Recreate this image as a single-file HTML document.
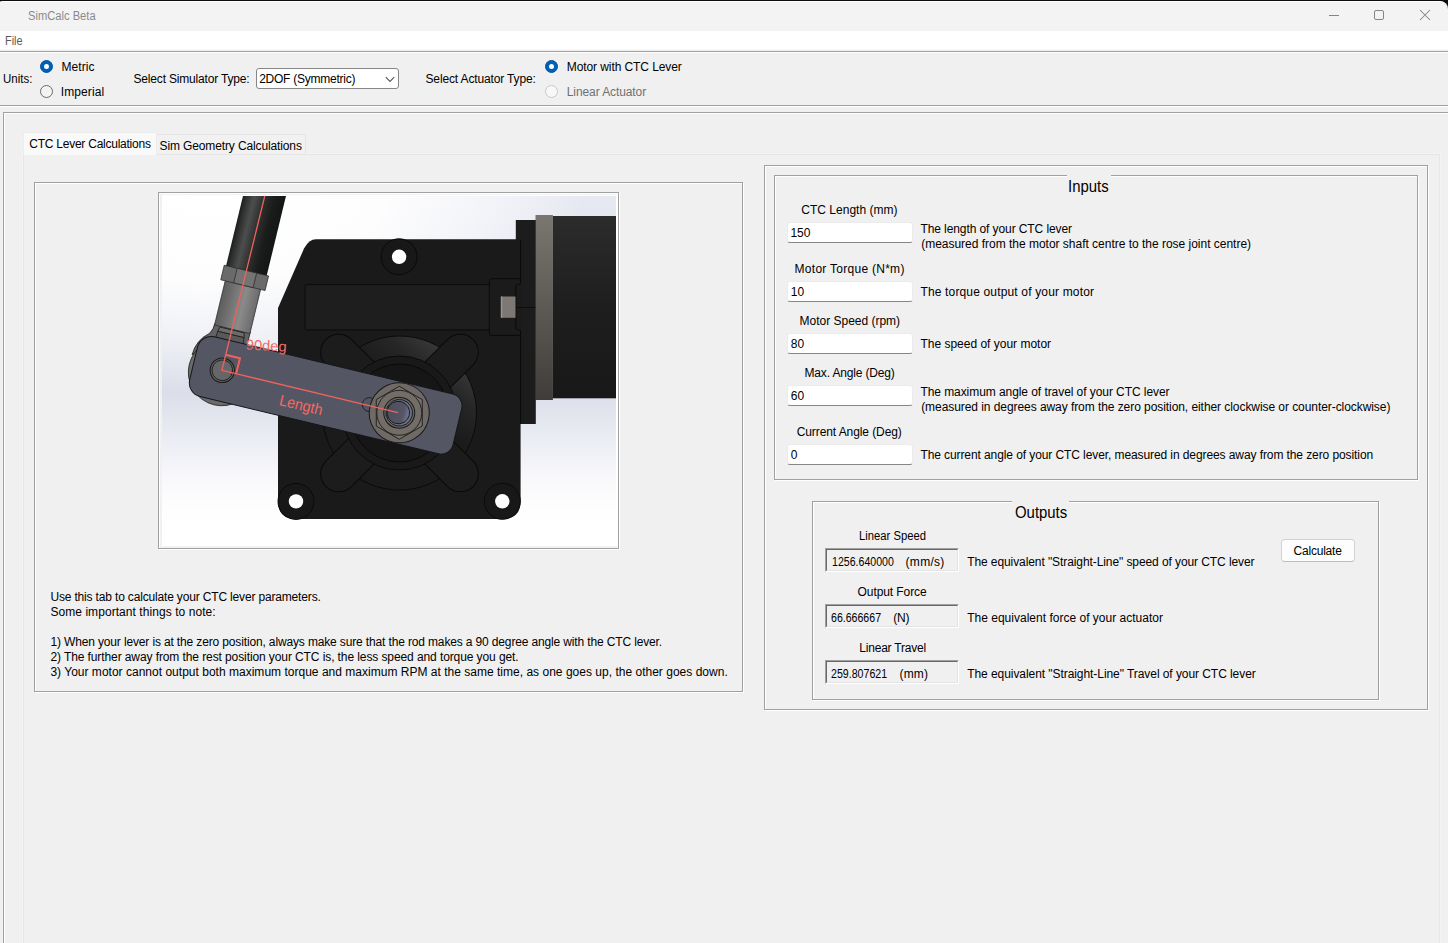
<!DOCTYPE html>
<html><head><meta charset="utf-8"><title>SimCalc Beta</title>
<style>
html,body{margin:0;padding:0;background:#f0f0f0}
body{width:1448px;height:943px;overflow:hidden;position:relative;background:#f0f0f0;font-family:"Liberation Sans",sans-serif;font-size:12px;color:#000}
div{position:absolute;box-sizing:border-box}
.t{white-space:pre;line-height:16px;height:16px}
.ew{border:1px solid #fff}
.eg{border:1px solid #a0a0a0}
.hl{left:0;width:1448px;height:1px}
.in{background:#fff;border:1px solid #ebebeb;border-bottom:1px solid #868686;border-radius:3px;width:126px;height:21px;left:787px}
.of{width:134px;height:24px;left:825px;border-top:1px solid #a0a0a0;border-left:1px solid #a0a0a0;border-right:1px solid #fff;border-bottom:1px solid #fff}
.of i{position:absolute;display:block;left:0;top:0;right:0;bottom:0;border-top:1px solid #696969;border-left:1px solid #696969;border-right:1px solid #e3e3e3;border-bottom:1px solid #e3e3e3}
.rb{width:13px;height:13px;border-radius:50%}
.rb.on{background:#005fb8;border:1px solid #00559f}
.rb.on i{position:absolute;left:3px;top:3px;width:5px;height:5px;border-radius:50%;background:#fff}
.rb.off{background:#f3f3f3;border:1px solid #6a6a6a}
.rb.dis{background:#f8f8f8;border:1px solid #c8c8c8}
</style></head><body>

<div style="left:0;top:0;width:1448px;height:12px;background:#0c0c0c"></div>
<div style="left:-5px;top:1px;width:1453px;height:30px;background:#f3f3f3;border-radius:8px 8px 0 0;border-top:1px solid #fff"></div>
<div style="left:0;top:31px;width:1448px;height:18px;background:#fff"></div>
<div class="hl" style="top:49px;background:#f8f8f8"></div>
<div class="hl" style="top:51px;background:#a0a0a0"></div>
<div class="hl" style="top:52px;background:#fff"></div>
<div class="hl" style="top:105px;background:#a0a0a0"></div>
<div class="hl" style="top:106px;background:#fff"></div>
<svg style="position:absolute;left:1320px;top:5px" width="120" height="22" viewBox="1320 5 120 22" fill="none" stroke="#858585" stroke-width="1">
<path d="M1329,15.5 H1339"/>
<rect x="1374.5" y="10.5" width="9" height="9" rx="1.5"/>
<path d="M1420,10 L1430,20 M1430,10 L1420,20" stroke-width="1.05"/>
</svg>
<div style="left:4px;top:113px;width:1500px;height:900px;border-left:1px solid #fff;border-top:1px solid #fff"></div>
<div style="left:3px;top:112px;width:1500px;height:900px;border-left:1px solid #a0a0a0;border-top:1px solid #a0a0a0"></div>
<div style="left:22px;top:153px;width:1419px;height:900px;border:1px solid #f4f4f4"></div>
<div style="left:23px;top:154px;width:1417px;height:900px;border:1px solid #e6e6e6"></div>
<div style="left:156px;top:134px;width:150px;height:21px;border:1px solid #e5e5e5;border-left:none;border-bottom:1px solid #e5e5e5;background:#f1f1f1"></div>
<div style="left:23px;top:132px;width:134px;height:23px;border:1px solid #ececec;border-bottom:none;background:#f9f9f9"></div>
<div class="rb on" style="left:40px;top:60px"><i></i></div>
<div class="rb off" style="left:40px;top:85px"></div>
<div class="rb on" style="left:545px;top:60px"><i></i></div>
<div class="rb dis" style="left:545px;top:85px"></div>
<div style="left:256px;top:68px;width:143px;height:21px;background:#fff;border:1px solid #868686;border-radius:3px"></div>
<svg style="position:absolute;left:384px;top:74px" width="12" height="10" viewBox="384 74 12 10" fill="none" stroke="#555" stroke-width="1.1"><path d="M385.8,77.2 L390,81.4 L394.2,77.2"/></svg>
<div class="ew" style="left:35px;top:183px;width:709px;height:510px"></div><div class="eg" style="left:34px;top:182px;width:709px;height:510px"></div>
<div style="left:159px;top:193px;width:461px;height:357px;border:1px solid #fff"></div>
<div style="left:158px;top:192px;width:461px;height:357px;border:1px solid #a0a0a0;background:#fff"></div>
<div style="left:160px;top:194px;width:457px;height:354px;background:#f1f1f1"></div>
<div style="left:161.5px;top:195px;width:456.5px;height:351px;background:#fff"></div>
<svg style="position:absolute;left:162px;top:196px" width="454" height="350" viewBox="162 196 454 350">
<defs>
<linearGradient id="bgv" x1="0" y1="195" x2="0" y2="546" gradientUnits="userSpaceOnUse">
<stop offset="0" stop-color="#e7e9f2"/><stop offset=".4" stop-color="#dfe2ec"/><stop offset=".57" stop-color="#dcdfea"/><stop offset=".68" stop-color="#e9ebf2"/><stop offset=".8" stop-color="#f8f8fb"/><stop offset=".9" stop-color="#fefefe"/><stop offset="1" stop-color="#ffffff"/>
</linearGradient>
<radialGradient id="bgw" cx="0" cy="0" r="1" gradientUnits="userSpaceOnUse" gradientTransform="translate(215 190) scale(370 200)">
<stop offset="0" stop-color="#fff" stop-opacity="1"/><stop offset=".45" stop-color="#fff" stop-opacity=".93"/><stop offset=".75" stop-color="#fff" stop-opacity=".5"/><stop offset="1" stop-color="#fff" stop-opacity="0"/>
</radialGradient>
<linearGradient id="rodg" x1="-21" y1="0" x2="21" y2="0" gradientUnits="userSpaceOnUse">
<stop offset="0" stop-color="#1a1c1c"/><stop offset=".07" stop-color="#2a2c2c"/><stop offset=".27" stop-color="#4c4e4e"/><stop offset=".5" stop-color="#2e3030"/><stop offset=".75" stop-color="#1a1c1c"/><stop offset="1" stop-color="#141616"/>
</linearGradient>
<linearGradient id="shankg" x1="-19" y1="0" x2="19" y2="0" gradientUnits="userSpaceOnUse">
<stop offset="0" stop-color="#5c5c5c"/><stop offset=".25" stop-color="#6e6e6e"/><stop offset=".62" stop-color="#8a8a8a"/><stop offset="1" stop-color="#6a6a6a"/>
</linearGradient>
<linearGradient id="plateg" x1="0" y1="215" x2="0" y2="400" gradientUnits="userSpaceOnUse">
<stop offset="0" stop-color="#7a7770"/><stop offset="1" stop-color="#403c39"/>
</linearGradient>
<linearGradient id="cylg" x1="0" y1="216" x2="0" y2="398" gradientUnits="userSpaceOnUse">
<stop offset="0" stop-color="#2c2c2c"/><stop offset=".5" stop-color="#1e1e1e"/><stop offset="1" stop-color="#181818"/>
</linearGradient>
<linearGradient id="ringg" x1="452" y1="352" x2="412" y2="400" gradientUnits="userSpaceOnUse">
<stop offset="0" stop-color="#3a3a3a"/><stop offset=".5" stop-color="#262626"/><stop offset="1" stop-color="#1b1b1b"/>
</linearGradient>
<linearGradient id="shaftg" x1="170" y1="0" x2="193" y2="0" gradientUnits="userSpaceOnUse">
<stop offset="0" stop-color="#4d4f5d"/><stop offset=".7" stop-color="#545666"/><stop offset="1" stop-color="#7a809c"/>
</linearGradient>
</defs>
<rect x="161" y="195" width="455" height="351" fill="url(#bgv)"/>
<rect x="161" y="195" width="455" height="351" fill="url(#bgw)"/>
<!-- motor cylinder / plate / flange -->
<rect x="552.5" y="216" width="64" height="182.3" fill="url(#cylg)"/>
<rect x="535.5" y="215" width="17.4" height="185" fill="url(#plateg)"/>
<rect x="515.8" y="220" width="20" height="204" fill="#1c1c1c"/>
<!-- body -->
<path d="M316,239.2 H520.6 V501 Q520.6,519 502.6,519 H296 Q278,519 278,501 V308 L304,248.5 Q309,239.2 316,239.2 Z" fill="#1a1a1a"/>
<!-- recess -->
<rect x="305" y="284.6" width="186" height="45.3" rx="2" fill="#1e1e1e" stroke="#0b0b0b" stroke-width="1"/>
<path d="M520.6,278.7 H492 Q489.3,278.7 489.3,281.5 V332.5 Q489.3,335.4 492,335.4 H520.6" fill="#1b1b1b" stroke="#0b0b0b" stroke-width="1"/>
<path d="M520.6,240 V283.7 L515.8,285.3 V328.8 L520.6,330.5 V424" fill="none" stroke="#0b0b0b" stroke-width="1"/>
<path d="M516,307.5 H535.5" fill="none" stroke="#0b0b0b" stroke-width=".8"/>
<rect x="501" y="296.5" width="14.5" height="21.3" fill="#7d7873"/>
<path d="M501.5,296.5 V317.8" stroke="#9a9590" stroke-width="1.5"/>
<!-- ears -->
<g fill="#1c1c1c" stroke="#0a0a0a" stroke-width="1">
<circle cx="399.5" cy="413" r="77" fill="url(#ringg)"/>
<g transform="translate(399.5 413)">
<rect x="-18" y="-104" width="36" height="208" rx="18" transform="rotate(45)"/>
<rect x="-18" y="-104" width="36" height="208" rx="18" transform="rotate(-45)"/>
</g>
<circle cx="399.5" cy="413" r="57" fill="#191919"/>
<circle cx="399.5" cy="413" r="49" fill="#161616"/>
</g>
<!-- mounting holes -->
<g stroke="#0a0a0a" stroke-width="1" fill="#181818">
<circle cx="399.1" cy="256.8" r="18"/><circle cx="296" cy="501.4" r="18"/><circle cx="502.3" cy="501.3" r="18"/>
</g>
<g fill="#fff"><circle cx="399.1" cy="256.8" r="7.2"/><circle cx="296" cy="501.4" r="7.2"/><circle cx="502.3" cy="501.3" r="7.2"/></g>
<!-- rod -->
<g transform="translate(222.3 370.3) rotate(13.6)">
<path d="M-33,-8 A33,33 0 0 1 -21,-33 Q-18,-38 -18.2,-44 H18.2 V-20 H-20 Z" fill="#626262" stroke="#222" stroke-width=".8"/>
<circle cx="0" cy="2" r="33.5" fill="#6b6b6b" stroke="#222" stroke-width=".8"/>
<rect x="-18.2" y="-90" width="36.4" height="47.8" fill="url(#shankg)" stroke="#2a2a2a" stroke-width=".7"/>
<path d="M-13.5,-37 H13.5 L14.5,-26 H-14.5 Z" fill="#595959" stroke="#1e1e1e" stroke-width=".8"/><path d="M-12.5,-41.5 H12.5 L13.5,-37 H-13.5 Z" fill="#6c6c6c" stroke="#1e1e1e" stroke-width=".8"/>
<rect x="-20.9" y="-210" width="41.8" height="108" fill="url(#rodg)"/>
<rect x="-22.8" y="-102.6" width="45.6" height="15" fill="#6a6a6a" stroke="#2a2a2a" stroke-width=".7"/>
<rect x="-9.5" y="-102.6" width="20" height="15" fill="#747474" stroke="#2a2a2a" stroke-width=".7"/>
</g>
<!-- lever -->
<g transform="translate(222.3 370.3) rotate(13.5)">
<path d="M-15.5,-30.7 H229.7 A12,12 0 0 1 241.7,-18.7 V18.7 A12,12 0 0 1 229.7,30.7 H-15.5 A14,14 0 0 1 -29.5,16.7 V-16.7 A14,14 0 0 1 -15.5,-30.7 Z" fill="#545664" stroke="#16171b" stroke-width="1"/>
<circle cx="0" cy="0" r="12.2" fill="#5e5e60" stroke="#1a1a1a" stroke-width="1"/>
<circle cx="0" cy="0" r="10.3" fill="#666668" stroke="#1a1a1a" stroke-width=".8"/>
<!-- washer & nut -->
<circle cx="151" cy="-1" r="7" fill="#545664" stroke="#1a1a1a" stroke-width=".8"/>
<circle cx="182" cy="0" r="30" fill="#6f6a65" stroke="#1a1a1a" stroke-width="1"/>
<path d="M182,-26.5 L205,-13.2 V13.2 L182,26.5 L159,13.2 V-13.2 Z" fill="#77726d" stroke="#24221f" stroke-width="1" transform="rotate(-13.5 182 0)"/>
<circle cx="182" cy="0" r="22.5" fill="#726d68" stroke="#24221f" stroke-width=".9"/>
<circle cx="182" cy="0" r="15.5" fill="#6a6661" stroke="#1a1a1a" stroke-width="1"/>
<circle cx="182" cy="0" r="13.3" fill="#6c7088" stroke="#1a1a1a" stroke-width=".9"/>
<circle cx="181" cy="0" r="11.3" fill="url(#shaftg)" stroke="#1a1a1a" stroke-width=".9"/>
</g>
<!-- red annotation -->
<g stroke="#f0625c" fill="none" stroke-width="1.3">
<path d="M266.5,189 L221.9,370.3 L398,412.6"/>
<path d="M225.7,354.7 L240,358.2 L236.2,373.6" stroke-width="2"/>
</g>
<g fill="#f26a64" font-family="'Liberation Sans',sans-serif">
<text x="245.5" y="349.5" font-size="14.5" transform="rotate(3 245.5 349.5)" textLength="41" lengthAdjust="spacingAndGlyphs">90deg</text>
<text x="278.5" y="405" font-size="15.5" transform="rotate(13.5 278.5 405)" textLength="44" lengthAdjust="spacingAndGlyphs">Length</text>
</g>
</svg>

<div class="ew" style="left:765px;top:166px;width:664px;height:545px"></div><div class="eg" style="left:764px;top:165px;width:664px;height:545px"></div>
<div class="ew" style="left:775px;top:176px;width:644px;height:305px"></div><div class="eg" style="left:774px;top:175px;width:644px;height:305px"></div>
<div style="left:1067px;top:174px;width:44px;height:4px;background:#f0f0f0"></div>
<div class="ew" style="left:813px;top:502px;width:567px;height:199px"></div><div class="eg" style="left:812px;top:501px;width:567px;height:199px"></div>
<div style="left:1012px;top:500px;width:57px;height:4px;background:#f0f0f0"></div>
<div class="in" style="top:222px"></div>
<div class="in" style="top:281px"></div>
<div class="in" style="top:333px"></div>
<div class="in" style="top:385px"></div>
<div class="in" style="top:444px"></div>
<div class="of" style="top:548px"><i></i></div>
<div class="of" style="top:604px"><i></i></div>
<div class="of" style="top:660px"><i></i></div>
<div style="left:1281px;top:539px;width:74px;height:23px;background:#fdfdfd;border:1px solid #d2d2d2;border-bottom-color:#bdbdbd;border-radius:4px"></div>
<div class="t" style="left:28.20px;top:8px;letter-spacing:0.000px;color:#8a8a8a;transform:scaleX(0.9299);transform-origin:0 0">SimCalc Beta</div>
<div class="t" style="left:5.40px;top:33px;letter-spacing:0.000px;color:#5a5a5a;transform:scaleX(0.9053);transform-origin:0 0">File</div>
<div class="t" style="left:2.50px;top:71px;letter-spacing:0.000px;transform:scaleX(0.9558);transform-origin:0 0">Units:</div>
<div class="t" style="left:61.50px;top:59px;letter-spacing:0.087px">Metric</div>
<div class="t" style="left:60.70px;top:84px;letter-spacing:0.127px">Imperial</div>
<div class="t" style="left:133.50px;top:71px;letter-spacing:-0.177px">Select Simulator Type:</div>
<div class="t" style="left:259.20px;top:71px;letter-spacing:-0.247px">2DOF (Symmetric)</div>
<div class="t" style="left:425.50px;top:71px;letter-spacing:-0.141px">Select Actuator Type:</div>
<div class="t" style="left:566.80px;top:59px;letter-spacing:-0.089px">Motor with CTC Lever</div>
<div class="t" style="left:566.80px;top:84px;letter-spacing:-0.099px;color:#707070">Linear Actuator</div>
<div class="t" style="left:29.30px;top:136px;letter-spacing:-0.244px">CTC Lever Calculations</div>
<div class="t" style="left:159.50px;top:138px;letter-spacing:-0.124px">Sim Geometry Calculations</div>
<div class="t" style="left:50.40px;top:589px;letter-spacing:-0.164px">Use this tab to calculate your CTC lever parameters.</div>
<div class="t" style="left:50.40px;top:604px;letter-spacing:0.062px">Some important things to note:</div>
<div class="t" style="left:50.40px;top:634px;letter-spacing:-0.143px">1) When your lever is at the zero position, always make sure that the rod makes a 90 degree angle with the CTC lever.</div>
<div class="t" style="left:50.40px;top:649px;letter-spacing:-0.095px">2) The further away from the rest position your CTC is, the less speed and torque you get.</div>
<div class="t" style="left:50.40px;top:664px;letter-spacing:0.014px">3) Your motor cannot output both maximum torque and maximum RPM at the same time, as one goes up, the other goes down.</div>
<div class="t" style="left:1068.07px;top:177px;letter-spacing:0.000px;font-size:16px;line-height:20px;height:20px;transform:scaleX(0.9322);transform-origin:0 0">Inputs</div>
<div class="t" style="left:801.20px;top:202px;letter-spacing:0.027px">CTC Length (mm)</div>
<div class="t" style="left:790.40px;top:225px;letter-spacing:0.000px">150</div>
<div class="t" style="left:920.40px;top:221px;letter-spacing:-0.088px">The length of your CTC lever</div>
<div class="t" style="left:921.20px;top:236px;letter-spacing:-0.015px">(measured from the motor shaft centre to the rose joint centre)</div>
<div class="t" style="left:794.60px;top:261px;letter-spacing:0.273px">Motor Torque (N*m)</div>
<div class="t" style="left:790.80px;top:284px;letter-spacing:0.000px">10</div>
<div class="t" style="left:920.40px;top:284px;letter-spacing:0.161px">The torque output of your motor</div>
<div class="t" style="left:799.50px;top:313px;letter-spacing:-0.006px">Motor Speed (rpm)</div>
<div class="t" style="left:790.80px;top:336px;letter-spacing:0.000px">80</div>
<div class="t" style="left:920.40px;top:336px;letter-spacing:-0.002px">The speed of your motor</div>
<div class="t" style="left:804.50px;top:365px;letter-spacing:-0.158px">Max. Angle (Deg)</div>
<div class="t" style="left:790.80px;top:388px;letter-spacing:0.000px">60</div>
<div class="t" style="left:920.40px;top:384px;letter-spacing:-0.066px">The maximum angle of travel of your CTC lever</div>
<div class="t" style="left:921.20px;top:399px;letter-spacing:-0.065px">(measured in degrees away from the zero position, either clockwise or counter-clockwise)</div>
<div class="t" style="left:796.70px;top:424px;letter-spacing:-0.088px">Current Angle (Deg)</div>
<div class="t" style="left:790.80px;top:447px;letter-spacing:0.000px">0</div>
<div class="t" style="left:920.40px;top:447px;letter-spacing:-0.090px">The current angle of your CTC lever, measured in degrees away from the zero position</div>
<div class="t" style="left:1014.50px;top:503px;letter-spacing:0.000px;font-size:16px;line-height:20px;height:20px;transform:scaleX(0.9316);transform-origin:0 0">Outputs</div>
<div class="t" style="left:859.20px;top:528px;letter-spacing:0.000px;transform:scaleX(0.9375);transform-origin:0 0">Linear Speed</div>
<div class="t" style="left:831.60px;top:554px;letter-spacing:0.000px;transform:scaleX(0.8821);transform-origin:0 0">1256.640000</div>
<div class="t" style="left:905.60px;top:554px;letter-spacing:0.276px">(mm/s)</div>
<div class="t" style="left:967.20px;top:554px;letter-spacing:-0.087px">The equivalent "Straight-Line" speed of your CTC lever</div>
<div class="t" style="left:1293.50px;top:543px;letter-spacing:-0.207px">Calculate</div>
<div class="t" style="left:857.60px;top:584px;letter-spacing:-0.087px">Output Force</div>
<div class="t" style="left:830.90px;top:610px;letter-spacing:0.000px;transform:scaleX(0.8817);transform-origin:0 0">66.666667</div>
<div class="t" style="left:893.30px;top:610px;letter-spacing:-0.231px">(N)</div>
<div class="t" style="left:967.20px;top:610px;letter-spacing:0.010px">The equivalent force of your actuator</div>
<div class="t" style="left:859.30px;top:640px;letter-spacing:-0.210px">Linear Travel</div>
<div class="t" style="left:830.90px;top:666px;letter-spacing:0.000px;transform:scaleX(0.8851);transform-origin:0 0">259.807621</div>
<div class="t" style="left:899.60px;top:666px;letter-spacing:0.137px">(mm)</div>
<div class="t" style="left:967.20px;top:666px;letter-spacing:-0.063px">The equivalent "Straight-Line" Travel of your CTC lever</div>
</body></html>
